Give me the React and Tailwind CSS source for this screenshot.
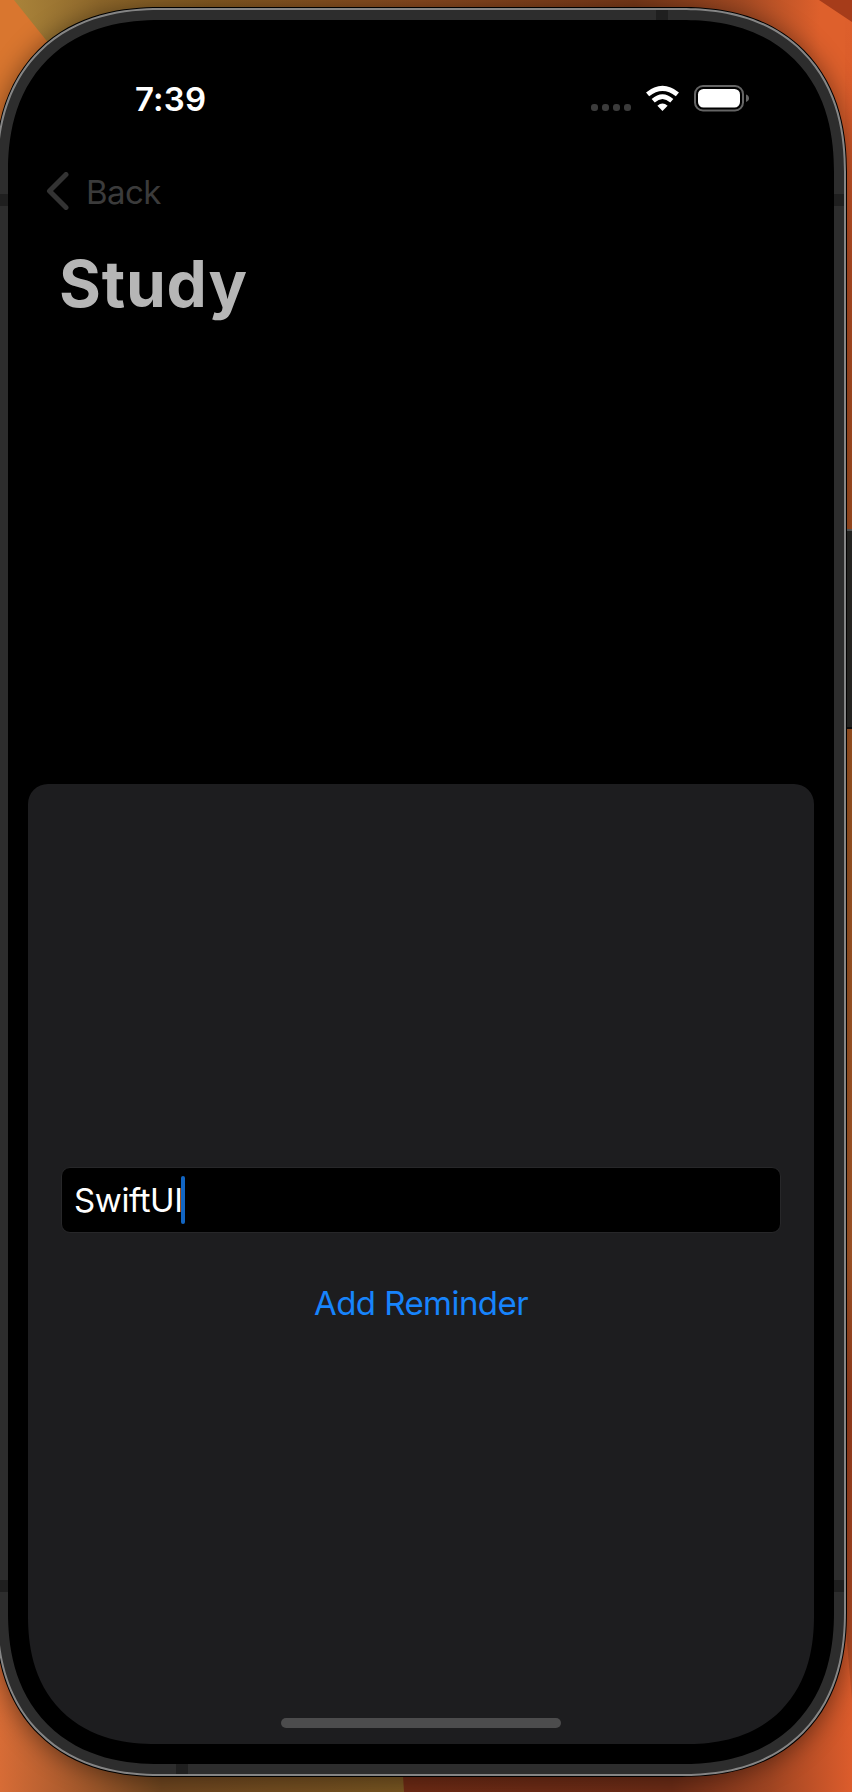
import React from "react";

function StatusBar() {
  return (
    <div className="flex h-[116px] items-start text-white">
      <div className="ml-[127px] mt-[59px] text-[33px] font-semibold leading-[40px] tracking-[0.2px]">7:39</div>
      <div className="ml-auto mr-[84px] mt-[64px] flex items-start">
        <div className="mt-[20px] flex gap-[4px]">
          {[0, 1, 2, 3].map((i) => (
            <span key={i} className="size-[7px] rounded-[3px] bg-[#3b3b3b]" />
          ))}
        </div>
        <svg className="ml-[14px] mt-px" width="35" height="27" viewBox="0 0 35 27" fill="none">
          <path d="M2.6 9.4 Q17.5 -2.6 32.4 9.4" stroke="#fff" strokeWidth="5" />
          <path d="M8.2 15.8 Q17.5 7.4 26.8 15.8" stroke="#fff" strokeWidth="4.6" />
          <path d="M17.5 26 L12.4 20.8 Q17.5 16.2 22.6 20.8 Z" fill="#fff" />
        </svg>
        <svg className="ml-[14px]" width="56" height="28" viewBox="0 0 56 28">
          <rect x="1" y="2" width="48" height="24.5" rx="8" fill="none" stroke="#656565" strokeWidth="2" />
          <rect x="4" y="5" width="42" height="18.5" rx="5.5" fill="#fff" />
          <path d="M52 10.5 Q55 11.5 55 14.3 Q55 17 52 18 Z" fill="#656565" />
        </svg>
      </div>
    </div>
  );
}

export default function App() {
  return (
    <div className="relative h-[1792px] w-[852px] overflow-hidden bg-[#a34d20] font-['Inter',sans-serif]">
      <svg className="absolute inset-0" width="852" height="1792" viewBox="0 0 852 1792">
        <defs>
          <linearGradient id="top" x1="0" x2="1" y1="0" y2="0">
            <stop offset="0" stopColor="#ad873c" />
            <stop offset="0.12" stopColor="#8f682b" />
            <stop offset="0.25" stopColor="#885c22" />
            <stop offset="0.5" stopColor="#8c4b20" />
            <stop offset="0.75" stopColor="#7c3a19" />
            <stop offset="0.88" stopColor="#a84c24" />
            <stop offset="0.97" stopColor="#de602c" />
          </linearGradient>
          <linearGradient id="edge" x1="0" x2="0" y1="0" y2="1">
            <stop offset="0" stopColor="#de602c" />
            <stop offset="0.07" stopColor="#d95b2a" />
            <stop offset="0.15" stopColor="#c15226" />
            <stop offset="0.3" stopColor="#ae5322" />
            <stop offset="0.45" stopColor="#ab5c25" />
            <stop offset="0.7" stopColor="#b8602c" />
            <stop offset="0.78" stopColor="#a94420" />
            <stop offset="0.93" stopColor="#bd5026" />
            <stop offset="1" stopColor="#dc5c2c" />
          </linearGradient>
          <linearGradient id="low" x1="0" x2="1" y1="0" y2="0">
            <stop offset="0" stopColor="#d76c36" />
            <stop offset="0.12" stopColor="#b86030" />
            <stop offset="0.4" stopColor="#714720" />
            <stop offset="1" stopColor="#7a5722" />
          </linearGradient>
          <linearGradient id="lowRight" x1="0" x2="1" y1="0" y2="0">
            <stop offset="0" stopColor="#702b15" />
            <stop offset="0.6" stopColor="#6f2d17" />
            <stop offset="0.82" stopColor="#a04522" />
            <stop offset="1" stopColor="#dc5c2c" />
          </linearGradient>
        </defs>
        <rect width="846" height="230" fill="url(#top)" />
        <path d="M0 0H14L54 50V200H0Z" fill="#d9762f" />
        <rect x="845" width="7" height="1792" fill="url(#edge)" />
        <path d="M819 0H852V22Z" fill="#a63c1a" />
        <rect y="1600" width="404" height="192" fill="url(#low)" />
        <path d="M402 1760L404 1792H852V1700L845 1620H700V1760Z" fill="url(#lowRight)" />
      </svg>

      <div className="absolute left-[846px] top-[529px] h-[200px] w-[12px] border-y-2 border-t-[#666] border-b-[#111] bg-[#2c2b28]" />

      <div className="relative -ml-[5px] flex h-[1777px] w-[852px] flex-col pt-[7px]">
        <div className="flex h-[1770px] rounded-[145px] bg-black p-px shadow-[0_2px_26px_rgba(0,0,0,0.45)] [corner-shape:superellipse(1.2)] supports-[corner-shape:squircle]:rounded-[165px]">
          <div className="flex flex-1 rounded-[144px] bg-[#858585] p-[2px] [corner-shape:superellipse(1.2)] supports-[corner-shape:squircle]:rounded-[164px]">
            <div className="relative flex flex-1 rounded-[142px] bg-[#2d2d2d] p-[10px] [corner-shape:superellipse(1.2)] supports-[corner-shape:squircle]:rounded-[162px]">
              <span className="absolute left-[658px] top-0 h-[10px] w-[12px] bg-[#1f1f1f]" />
              <span className="absolute bottom-0 left-[178px] h-[10px] w-[12px] bg-[#1f1f1f]" />
              <span className="absolute left-0 top-[184px] h-[12px] w-[10px] bg-[#1f1f1f]" />
              <span className="absolute right-0 top-[184px] h-[12px] w-[10px] bg-[#1f1f1f]" />
              <span className="absolute left-0 top-[1570px] h-[12px] w-[10px] bg-[#1f1f1f]" />
              <span className="absolute right-0 top-[1570px] h-[12px] w-[10px] bg-[#1f1f1f]" />

              <main className="flex flex-1 flex-col rounded-[132px] bg-black [corner-shape:superellipse(1.2)] supports-[corner-shape:squircle]:rounded-[152px]">
                <StatusBar />
                <div className="mt-[35px] flex h-[40px] items-center pl-[38px] text-[#3b3b3b]">
                  <svg width="23" height="38" viewBox="0 0 23 38" fill="none">
                    <path d="M20 2.5 L3.5 19 L20 35.5" stroke="#333" strokeWidth="5" strokeLinecap="round" strokeLinejoin="round" />
                  </svg>
                  <span className="ml-[17px] mt-[2px] text-[33px] leading-[40px] tracking-[-0.6px]">Back</span>
                </div>
                <h1 className="mt-[33px] pl-[51px] text-[64px] font-bold leading-[80px] tracking-[0.8px] text-[#b6b6b6]">Study</h1>
                <section className="mx-[20px] mb-[20px] mt-auto flex h-[960px] flex-col items-center rounded-b-[111px] rounded-t-[20px] bg-[#1d1d1f] [corner-bottom-left-shape:superellipse(1.2)] [corner-bottom-right-shape:superellipse(1.2)] supports-[corner-shape:squircle]:rounded-b-[128px]">
                  <div className="mt-[383px] flex h-[66px] w-[720px] shrink-0 items-center rounded-[9px] border border-[#272729] bg-black pl-[12px] text-[33px] text-white">
                    <span className="mt-[2px] tracking-[-0.4px]">SwiftUI</span>
                    <span className="-ml-[2px] h-[48px] w-[4px] rounded-[2px] bg-[#1265c2]" />
                  </div>
                  <button className="mt-[50px] text-[33px] leading-[40px] tracking-[-0.55px] text-[#1784fc]">Add Reminder</button>
                  <div className="mb-[16px] mt-auto h-[10px] w-[280px] rounded-full bg-[#4c4c4d]" />
                </section>
              </main>
            </div>
          </div>
        </div>
      </div>
    </div>
  );
}
